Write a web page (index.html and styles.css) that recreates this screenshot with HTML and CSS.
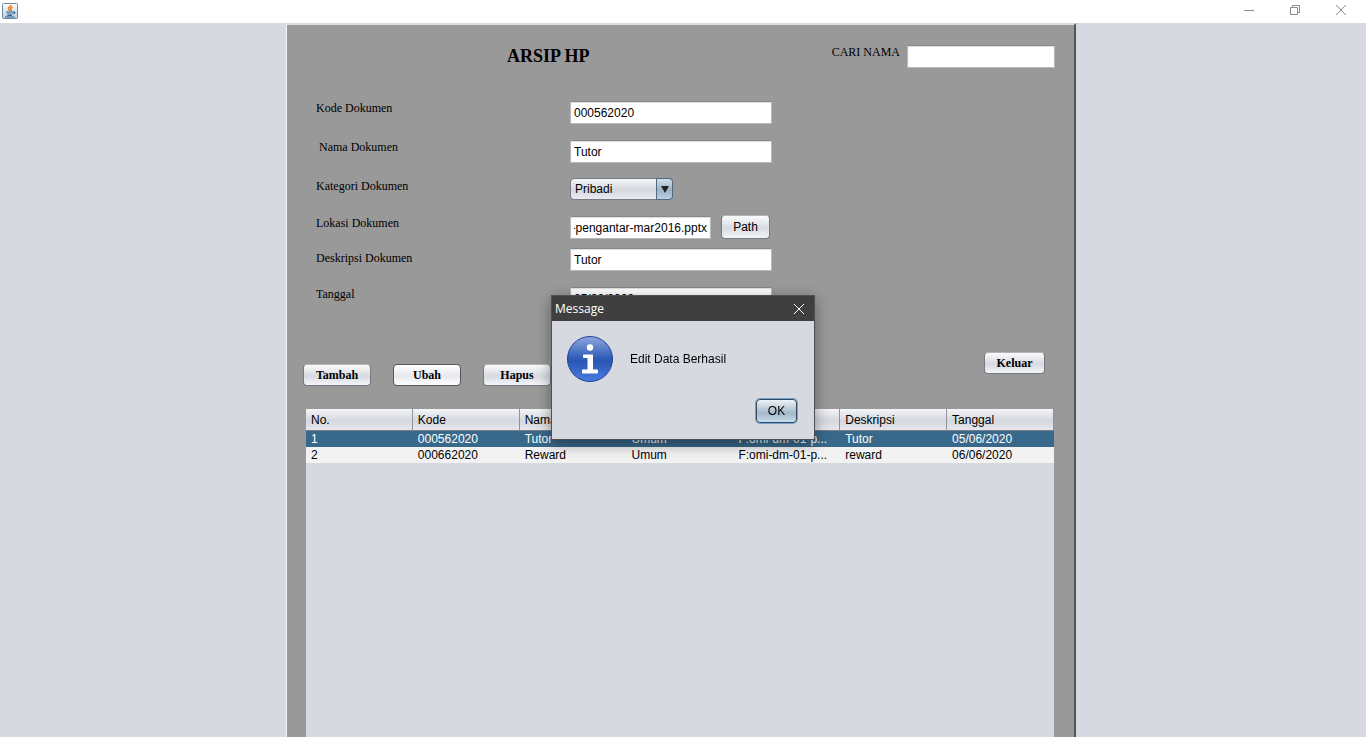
FILE: index.html
```html
<!DOCTYPE html>
<html lang="id">
<head>
<meta charset="utf-8">
<title>Arsip HP</title>
<link rel="stylesheet" href="styles.css">
</head>
<body>
<header class="titlebar">
  <svg class="app-icon" viewBox="0 0 16 16" aria-hidden="true">
    <defs><linearGradient id="appbg" x1="0" y1="0" x2="0" y2="1"><stop offset="0" stop-color="#ffffff"/><stop offset="1" stop-color="#b9cede"/></linearGradient></defs>
    <rect x=".5" y=".5" width="15" height="15" rx="1" fill="url(#appbg)" stroke="#71879b"/>
    <path d="M9 2c.5 1.500-3 2-2.500 3.600.2.900 1.300 1.300 1.200 2.400M10.500 4c-1.600.7-2.300 1.400-1.500 2.300.5.600.2 1.200-.5 1.700" fill="none" stroke="#ec7a1c" stroke-width="1.500"/>
    <path d="M4 9h7M5 11h5.500M5.500 12.500h4.500M3 14h9.500M11 9c2.500-.6 2.500 1.500.2 2" fill="none" stroke="#2f6090" stroke-width="1.100"/>
  </svg>
  <div class="window-buttons">
    <button class="window-button" aria-label="Minimize"><svg width="12" height="12" viewBox="0 0 12 12"><path d="M1 6.500h10"/></svg></button>
    <button class="window-button" aria-label="Restore"><svg width="12" height="12" viewBox="0 0 12 12"><path d="M1.500 3.500h7v7h-7zM3.500 3.500v-2h7v7h-2"/></svg></button>
    <button class="window-button" aria-label="Close"><svg width="12" height="12" viewBox="0 0 12 12"><path d="M1 1l10 10M11 1L1 11"/></svg></button>
  </div>
</header>
<main class="desktop">
  <section class="panel">
    <div class="heading">
      <h1 class="title">ARSIP HP</h1>
      <label class="search-label" for="cari">CARI NAMA</label>
      <input class="field search" id="cari" type="text">
    </div>
    <form class="form">
      <div class="labels">
        <label for="kode">Kode Dokumen</label>
        <label for="nama">&nbsp;Nama Dokumen</label>
        <label for="kategori">Kategori Dokumen</label>
        <label for="lokasi">Lokasi Dokumen</label>
        <label for="deskripsi">Deskripsi Dokumen</label>
        <label for="tanggal">Tanggal</label>
      </div>
      <div class="fields">
        <input class="field" id="kode" type="text" value="000562020">
        <input class="field" id="nama" type="text" value="Tutor">
        <div class="combo">
          <select class="combo-select" id="kategori"><option>Pribadi</option></select>
          <span class="combo-arrow"><svg width="8" height="8" viewBox="0 0 8 8"><path d="M0 1h8L4 8z" fill="#222"/></svg></span>
        </div>
        <div class="path-row">
          <input class="field path" id="lokasi" type="text" value="F:omi-dm-01-pengantar-mar2016.pptx">
          <button class="button path-button" type="button">Path</button>
        </div>
        <input class="field" id="deskripsi" type="text" value="Tutor">
        <input class="field" id="tanggal" type="text" value="05/06/2020">
      </div>
    </form>
    <div class="actions">
      <div class="action-group">
        <button class="button strong" type="button">Tambah</button>
        <button class="button strong hover" type="button">Ubah</button>
        <button class="button strong" type="button">Hapus</button>
      </div>
      <button class="button strong exit" type="button">Keluar</button>
    </div>
    <div class="table-area">
      <table class="table">
        <thead><tr><th>No.</th><th>Kode</th><th>Nama</th><th></th><th></th><th>Deskripsi</th><th>Tanggal</th></tr></thead>
        <tbody>
          <tr class="selected"><td>1</td><td>000562020</td><td>Tutor</td><td>Umum</td><td>F:omi-dm-01-p...</td><td>Tutor</td><td>05/06/2020</td></tr>
          <tr><td>2</td><td>000662020</td><td>Reward</td><td>Umum</td><td>F:omi-dm-01-p...</td><td>reward</td><td>06/06/2020</td></tr>
        </tbody>
      </table>
    </div>
  </section>
</main>
<div class="overlay">
  <div class="dialog" role="dialog" aria-labelledby="dialog-title">
    <div class="dialog-bar">
      <span id="dialog-title">Message</span>
      <button class="dialog-close" aria-label="Close"><svg width="12" height="12" viewBox="0 0 12 12"><path d="M1 1l10 10M11 1L1 11"/></svg></button>
    </div>
    <div class="dialog-body">
      <div class="message">
        <svg width="48" height="48" viewBox="0 0 48 48" aria-hidden="true">
          <defs>
            <linearGradient id="disc" x1="0" y1="0" x2="0" y2="1"><stop offset="0" stop-color="#8fa9dd"/><stop offset=".45" stop-color="#3560bb"/><stop offset=".55" stop-color="#2a57b4"/><stop offset="1" stop-color="#4a7ce0"/></linearGradient>
          </defs>
          <circle cx="24" cy="24" r="22.500" fill="url(#disc)" stroke="#22429a"/>
          <circle cx="24" cy="12.500" r="3.200" fill="#fff"/>
          <path d="M18 19.500h8.500q.5 0 .5.500v14.500h4q1 0 1 1v2q0 1-1 1H17q-1 0-1-1v-2q0-1 1-1h4.500V23H18q-1 0-1-1v-1.500q0-1 1-1z" fill="#fff"/>
        </svg>
        <p class="message-text">Edit Data Berhasil</p>
      </div>
      <button class="button ok" type="button">OK</button>
    </div>
  </div>
</div>
</body>
</html>
```
FILE: styles.css
```css
* { box-sizing: border-box; }

body {
  margin: 0;
  min-height: 100vh;
  display: flex;
  flex-direction: column;
  background: #d6d9df;
  color: #000;
  font: 12px/16px "Liberation Sans", Arial, sans-serif;
}

button, input, select { font: inherit; color: inherit; }

/* Window title bar */
.titlebar {
  display: flex;
  justify-content: space-between;
  align-items: flex-start;
  height: 23px;
  padding: 0 2px;
  background: #fff;
}
.app-icon { width: 16px; height: 16px; margin-top: 3px; }
.window-buttons { display: flex; }
.window-button {
  display: grid;
  place-items: center;
  width: 46px;
  height: 20px;
  padding: 0;
  border: 0;
  background: none;
}
.window-button path { fill: none; stroke: #8c8c8c; }

/* Main panel */
.desktop {
  flex: 1;
  display: flex;
  justify-content: center;
  padding-right: 4px;
}
.panel {
  display: flex;
  flex-direction: column;
  width: 100%;
  max-width: 790px;
  border: 1px solid #f4f4f4;
  border-top: 2px solid #dcdcdc;
  border-right: 2px solid #555;
  border-bottom: 0;
  background: #999;
}
.heading {
  display: grid;
  grid-template-columns: 1fr auto 148px;
  column-gap: 7px;
  padding: 20px 19px 0 220px;
}
.title {
  margin: 0;
  font: bold 18px/22px "Liberation Serif", "Times New Roman", serif;
}
.search-label { font: 12px/14px "Liberation Serif", "Times New Roman", serif; }

/* Form */
.field {
  width: 202px;
  height: 23px;
  padding: 0 3px;
  border: 1px solid #b8b8b8;
  border-top-color: #888;
  border-radius: 0;
  background: #fff;
  box-shadow: inset 0 1px 1px #ddd;
}
.search { width: 148px; }
.form {
  display: grid;
  grid-template-columns: 254px 1fr;
  margin-top: 33px;
  padding-left: 29px;
}
.labels {
  display: grid;
  grid-template-rows: 39px 39px 37px 35px 36px 23px;
  font: 12px/14px "Liberation Serif", "Times New Roman", serif;
}
.fields {
  display: grid;
  grid-template-rows: 39px 38px 37px 33px 39px 23px;
}
.path-row { display: flex; align-items: flex-end; align-self: start; gap: 10px; }
.path { width: 141px; direction: rtl; }
.combo { position: relative; width: 103px; height: 22px; }
.combo-select {
  width: 100%;
  height: 22px;
  padding: 0 4px;
  appearance: none;
  border: 1px solid #777c85;
  border-radius: 4px;
  background: linear-gradient(#f5f6f8, #d4d7de 55%, #e9ebf0);
}
.combo-arrow {
  position: absolute;
  inset: 0 0 0 auto;
  display: grid;
  place-items: center;
  width: 17px;
  border: 1px solid #52697d;
  border-radius: 0 4px 4px 0;
  background: linear-gradient(#d3dfe9, #9db3c6 55%, #b9cfe2);
  pointer-events: none;
}

/* Buttons */
.button {
  height: 22px;
  padding: 0;
  border: 1px solid #777a80;
  border-top-color: #b3b4b8;
  border-radius: 4px;
  background: linear-gradient(#fbfbfc, #d7dae1 55%, #f3f5fa);
}
.path-button { width: 49px; height: 24px; }
.strong {
  width: 68px;
  font: bold 12px/16px "Liberation Serif", "Times New Roman", serif;
}
.hover { border-color: #55575c; background: linear-gradient(#fff, #e6e8ee 55%, #fff); }
.exit { width: 61px; }
.actions {
  display: flex;
  justify-content: space-between;
  align-items: flex-start;
  margin-top: 42px;
  padding: 0 29px 0 16px;
}
.action-group { display: flex; gap: 22px; padding-top: 12px; }

/* Table */
.table-area {
  flex: 1;
  margin: 23px 20px 0 19px;
  background: #d6d9df;
}
.table {
  width: 100%;
  table-layout: fixed;
  border-collapse: separate;
  border-spacing: 0;
}
.table th, .table td {
  height: 16px;
  padding: 0 5px;
  font-weight: normal;
  text-align: left;
  white-space: nowrap;
}
.table th {
  height: 22px;
  border-right: 1px solid #8f939b;
  border-bottom: 1px solid #777c85;
  background: linear-gradient(#f5f6f8, #d4d7de 55%, #e5e7eb);
}
.table td { background: #f2f2f2; }
.table .selected td { background: #39698a; color: #fff; }

/* Message dialog */
.overlay {
  position: fixed;
  inset: 0;
  display: grid;
  place-items: center;
  padding-bottom: 2px;
}
.dialog {
  width: 264px;
  border: 1px solid #505050;
  background: #d6d9df;
  box-shadow: 0 4px 14px rgba(0, 0, 0, .4);
}
.dialog-bar {
  display: flex;
  justify-content: space-between;
  align-items: center;
  height: 25px;
  padding-left: 3px;
  background: #3f3f3f;
  color: #fff;
  font: 12px/16px "Open Sans", sans-serif;
}
.dialog-close {
  display: grid;
  place-items: center;
  width: 31px;
  height: 25px;
  padding: 0;
  border: 0;
  background: none;
}
.dialog-close path { fill: none; stroke: #fff; }
.dialog-body {
  display: flex;
  flex-direction: column;
  align-items: flex-end;
  gap: 16px;
  padding: 14px 17px 16px 14px;
}
.message { display: flex; align-items: center; gap: 16px; width: 100%; }
.message-text { margin: 0; }
.ok {
  width: 41px;
  height: 24px;
  border-color: #34495c;
  background: linear-gradient(#eef3f7, #a3b8c9 60%, #c8dff0);
  box-shadow: 0 0 0 1px #73a4d1;
}
```
